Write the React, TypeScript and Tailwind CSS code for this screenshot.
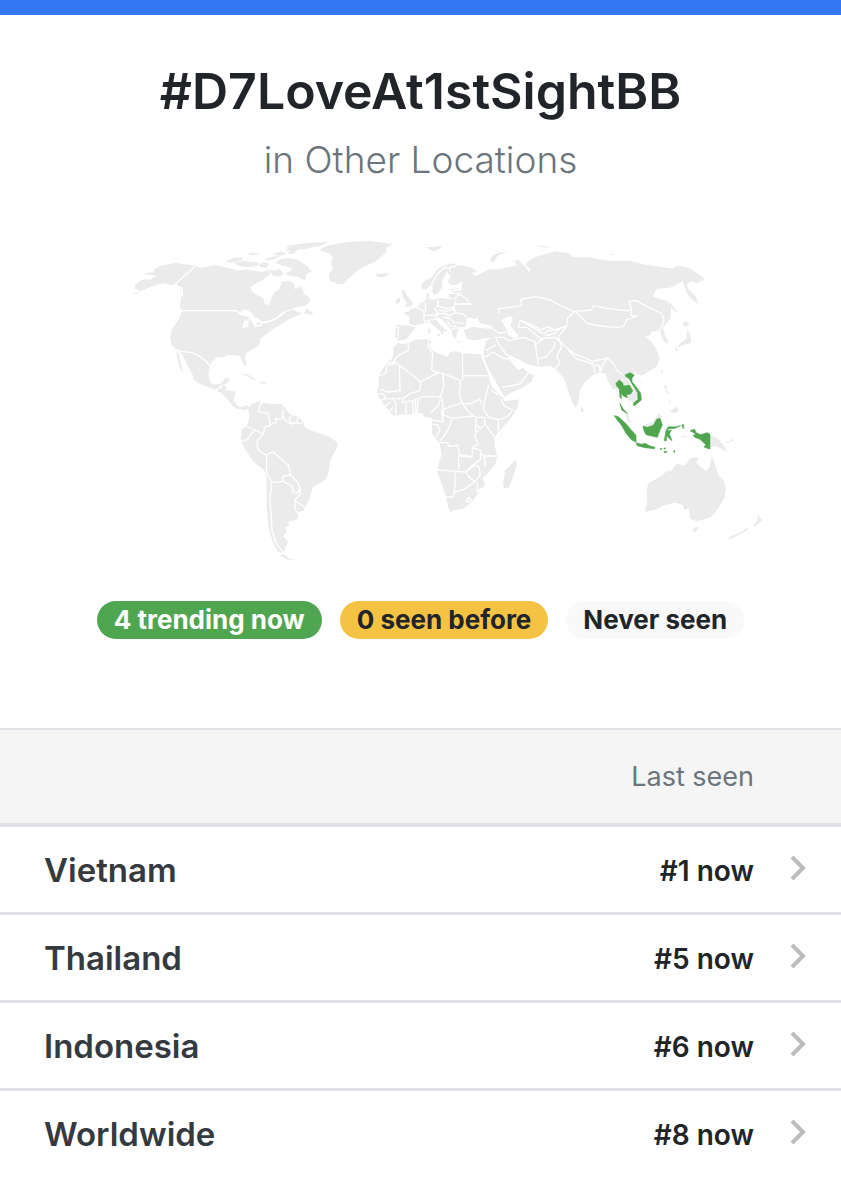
interface Trend {
  place: string;
  rank: string;
}

const trends: Trend[] = [
  { place: 'Vietnam', rank: '#1 now' },
  { place: 'Thailand', rank: '#5 now' },
  { place: 'Indonesia', rank: '#6 now' },
  { place: 'Worldwide', rank: '#8 now' },
];

interface Region {
  name: string;
  transform: string;
  land: string;
  borders?: string;
  trending?: string;
}

// Each region is drawn on its own grid, three units to one map unit
const regions: Region[] = [
  {
    name: 'North America',
    transform: 'translate(120 0) scale(0.33333)',
    land: `
      M45 165 L60 152 75 148 90 150 108 138 95 135 72 133 84 128 102 127 103 118 120 108 150 102 165 98 185 101 205 104 228 107 165 163 150 165 135 160 115 163 95 170 75 178 60 182 45 178Z
      M75 178 L50 187 30 194 52 190Z
      M228 107 L165 163 178 172 185 185 183 205 180 225 183 242 350 242 365 250 380 254 395 258 408 264 420 272 430 275 450 270 470 262 485 248 510 238 530 232 555 228 572 215 566 200 552 192 550 180 540 168 525 178 520 160 508 153 485 155 480 175 465 185 455 200 450 218 442 226 434 222 430 203 410 195 395 185 392 172 405 162 425 152 440 140 455 128 450 122 425 125 400 122 375 118 355 122 330 115 300 108 280 106 262 110 240 113Z
      M186 242 L350 242 360 255 395 262 410 275 430 279 450 276 470 268 487 255 500 245 520 238 530 245 548 250 530 258 510 266 492 276 480 285 455 300 440 312 422 325 418 345 395 360 380 368 374 380 379 398 375 410 366 395 362 380 345 376 325 375 310 382 290 383 275 395 270 408 258 393 245 384 232 372 215 368 190 365 168 358 155 345 150 325 155 300 168 280 180 262Z
      M552 250 L562 235 568 243 577 246 578 256 565 252Z
      M168 360 L190 365 215 368 232 374 245 384 258 393 270 408 265 430 270 455 278 463 295 463 305 458 313 446 330 443 325 456 312 464 302 478 290 480 260 470 240 462 222 450 217 432 205 412 196 392 185 370Z
      M168 362 L177 372 181 395 187 415 190 428 178 412 172 385Z
      M290 480 L302 478 308 466 318 468 320 480 335 484 346 490 342 510 350 525 365 533 380 529 392 536 370 540 350 534 335 517 320 500 300 490Z
      M362 432 L380 432 395 440 410 451 395 448 380 438Z
      M418 456 L432 454 442 459 425 462Z
      M465 98 L480 88 500 84 530 88 550 100 565 112 575 125 560 132 556 150 545 148 535 140 510 138 495 130 515 122 512 112 490 108Z
      M318 94 L345 82 372 83 362 92 345 97 328 99Z
      M342 100 L370 92 395 95 415 98 412 108 385 112 355 108Z
      M415 104 L430 96 448 100 440 114 422 112Z
      M440 118 L462 122 480 118 492 132 478 140 462 138Z
      M496 60 L530 42 570 38 625 36 612 44 585 50 560 56 535 58 520 72 500 70 512 62Z
      M432 88 L455 80 480 78 470 84 445 92Z
      M378 72 L400 68 420 70 400 76Z
      M455 72 L485 64 500 72 478 77Z
      M495 50 L515 44 525 46 505 53Z`,
    borders: `
      M228 107 L165 163 178 172 186 174 187 200
      M176 232 L183 242 350 242 360 250 378 254 392 260
      M358 250 L372 242 388 248 398 256
      M376 268 L370 293
      M388 264 L404 272 406 282
      M402 290 L424 284
      M424 280 L440 276 465 268 487 253
      M168 360 L190 365 215 368 232 374 245 384 258 393 270 408
      M288 480 L302 472 306 464
      M300 490 L318 480 342 492
      M335 515 L344 510`,
  },
  {
    name: 'Greenland',
    transform: 'translate(0 0)',
    land: `
      M322 18 L330 15 348 12 370 11 393 14 386 18 386 22 381 27 375 32 365 36 357 41 350 47 343 54 338 54 330 51 329 44 333 39 331 32 333 28 329 23 320 21Z`,
  },
  {
    name: 'South America',
    transform: 'translate(220 160) scale(0.33333)',
    land: `
      M85 55 L95 42 118 33 124 38 122 48 130 38 150 42 185 42 200 60 212 75 235 80 250 95 255 112 275 122 300 130 325 138 350 155 354 168 342 188 330 215 325 250 318 268 303 278 280 290 272 310 268 330 255 350 250 362 235 366 225 360 235 375 232 388 205 395 207 408 195 412 200 425 190 438 204 455 195 475 190 490 175 487 160 462 150 430 144 400 140 350 140 300 140 260 134 242 100 215 80 185 65 160 62 145 64 120 80 108 88 85Z
      M190 492 L200 498 208 506 228 510 205 511 180 496Z
      M0 4 L20 0 45 4 46 16 38 28 48 48 62 52 80 46 90 56 70 54 54 58 38 48 24 30 10 14Z`,
    borders: `
      M122 38 L115 65 145 70 150 100 148 108 M150 105 L170 95 165 85 185 88 190 60
      M190 60 L188 78 200 95 215 102 230 98 240 102 252 96
      M212 78 L208 90 215 102 M235 80 L230 98
      M80 108 L105 120 130 132 135 110 148 108
      M64 155 L82 148 95 130 105 121
      M130 132 L110 155 115 180 138 195 160 185 180 205 205 225 212 255 190 258 185 275 155 278 140 245 140 195
      M152 276 L155 290 150 320 153 370 156 420 168 460 192 490
      M185 272 L215 288 220 308 235 308 240 295 232 275 212 256
      M240 296 L242 312 225 330 226 362 M225 332 L252 350`,
  },
  {
    name: 'Europe',
    transform: 'translate(360 0) scale(0.33333)',
    land: `
      M106 285 L150 287 168 292 152 312 138 328 115 332 105 322 107 300Z
      M130 248 L148 244 152 238 172 232 195 245 192 270 200 280 175 283 165 290 148 286 148 260Z
      M172 232 L184 216 192 218 196 207 210 204 216 210 240 204 275 208 285 205 300 194 318 204 326 220 350 222 375 238 378 250 355 260 344 268 332 262 318 266 320 280 312 296 298 298 293 303 288 326 278 318 274 300 258 282 240 264 228 264 234 278 262 302 252 304 246 316 240 302 222 288 208 274 192 280Z
      M183 165 L195 152 215 142 228 122 248 108 272 100 292 104 302 118 298 136 306 154 290 165 272 164 264 155 272 138 262 125 252 142 245 156 247 172 235 190 222 195 215 182 212 165 200 178 185 178Z
      M124 180 L136 182 138 194 148 204 160 220 155 228 132 232 142 218 130 205Z
      M108 208 L120 203 120 218 106 222Z
      M46 130 L60 132 80 128 88 133 72 142 52 141Z
      M198 192 L208 188 206 204 198 204Z
      M272 178 L296 174 306 192 298 200 284 206 266 202 268 190 282 188Z
      M198 52 L225 50 252 46 240 54 222 64Z
      M226 314 L240 312 240 320Z M205 296 L210 294 210 310 204 310Z
      M290 334 L304 336 292 338Z
      M312 300 L340 290 370 295 405 298 414 308 410 322 375 325 345 331 320 326Z`,
    borders: `
      M106 290 L116 292 112 326 M148 285 L172 291
      M172 232 L192 244 192 268 198 280 M192 256 L212 256 228 254
      M196 218 L196 244 M234 206 L234 226 224 238 234 250 228 262
      M234 228 L258 236 282 232 286 212 M234 240 L256 244 282 238
      M228 252 L252 250 268 256 288 248 318 256
      M250 262 L268 264 282 278 314 280 M262 274 L272 290 290 288
      M272 300 L286 294 314 294 M280 230 L286 222 326 222
      M284 210 L290 198 308 190 M268 190 L300 190 M278 180 L300 180
      M215 182 L216 160 232 132 252 114 270 112 286 108 292 104
      M270 126 L268 112 M200 272 L232 266 M282 232 L286 248 M306 250 L320 262`,
  },
  {
    name: 'Africa',
    transform: 'translate(360 100) scale(0.33333)',
    land: `
      M100 52 L115 38 125 42 145 40 165 30 205 27 214 34 208 46 218 62 240 72 262 80 270 66 290 64 308 70 340 72 362 72 366 86 376 110 385 132 388 150 397 172 415 190 430 205 434 214 478 208 472 235 455 262 435 285 415 305 403 324 405 350 411 378 408 400 385 428 368 445 374 460 370 472 355 477 355 490 332 520 308 538 285 540 272 546 265 535 258 500 245 462 232 425 236 400 245 372 238 338 226 325 215 308 216 285 218 270 210 262 195 262 185 250 168 248 140 256 125 252 105 260 88 245 76 228 62 212 50 188 56 165 55 148 62 125 80 100 98 84 100 68Z
      M468 388 L471 402 458 445 446 474 432 474 429 458 434 436 434 420 450 408 460 396Z`,
    borders: `
      M145 40 L146 60 110 80 100 98 80 98 M102 92 V102 L80 106 78 128 60 138
      M105 95 L182 155 235 128 248 130 302 152 M118 108 L120 182 85 186 60 178
      M50 190 L72 194 78 206 60 212 M78 206 L100 206 108 222 108 258 M76 228 L92 216 M88 244 L100 232
      M205 28 L204 50 218 70 215 120 235 128 M182 155 L180 182 152 190 130 205 108 206
      M130 205 L128 218 160 212 172 204 M138 220 L138 254 M158 214 L160 250 M166 212 L168 248
      M248 130 L252 165 242 200 184 200 174 210 172 248 M242 200 L236 226 212 248
      M302 150 L298 190 306 218 250 238 246 205 M308 68 V150 M308 137 H385
      M250 238 L250 255 276 265 340 258 M306 218 L322 242 345 262 374 262
      M305 220 L330 222 360 208 366 224 M386 165 L374 215 370 236 386 262 415 268 440 262 458 240 430 226 424 208
      M395 182 L416 194 M415 268 V302 M374 262 L376 284 404 322 M350 284 L360 296 372 286
      M218 270 L250 276 244 240 M218 284 H232 L240 300 228 322 M276 265 L264 300 240 334
      M348 262 L346 320 354 344 338 352 336 380 300 374 292 345 268 350 262 338 238 338
      M346 308 L356 304 M296 374 V418 M232 420 L262 422 318 426 335 408 362 388 362 360 338 354
      M300 378 L336 382 M372 378 H408 M366 370 L374 385 376 410
      M318 426 L345 405 358 412 360 436 345 455 328 442Z M285 428 V462 L280 502 256 500
      M284 486 L312 478 345 455 M352 458 V488 M320 508 L328 504 334 510 328 516 320 514Z`,
  },
  {
    name: 'Asia',
    transform: 'translate(460 0) scale(0.33333)',
    land: `
      M-10 106 L15 108 40 115 50 124 38 128 28 124 46 138 60 132 76 124 90 118 120 118 150 110 172 106 162 92 176 90 190 104 204 120 206 128 212 118 196 106 200 95 225 82 255 72 290 64 325 70 340 82 390 82 440 92 510 92 560 105 610 112 640 115 652 106 690 115 715 132 736 148 722 154 714 160 692 154 680 165 690 182 708 200 714 222 695 208 680 190 674 170 668 154 655 160 640 170 625 174 590 176 578 198 600 208 622 212 634 232 632 265 620 280 608 292 616 318 626 335 618 342 606 325 600 300 590 302 575 305 565 320 550 316 572 332 590 360 600 385 590 410 565 425 545 437 525 430 510 428 510 445 490 445 480 455 472 462 472 490 480 508 474 500 468 478 458 478 445 455 436 430 418 428 405 432 395 438 375 455 360 480 355 515 348 534 338 520 325 485 312 445 298 430 285 415 270 408 232 410 200 402 180 390 150 376 146 382 158 402 175 420 188 414 205 428 222 436 214 456 185 475 150 490 134 502 126 488 110 460 90 425 72 385 72 360 78 332 100 322 100 300 95 288 60 280 52 262 75 250 75 238 35 222 18 206 2 194 6 155 -4 140Z
      M626 212 L638 228 656 250 646 246 632 230Z
      M668 280 L678 274 690 284 674 292Z
      M682 296 L692 318 694 338 670 346 650 352 662 340 680 325Z
      M643 352 L653 356 650 366Z
      M88 94 L100 76 120 67 142 67 114 76 102 96Z
      M225 46 L250 48 278 54 250 52Z
      M444 71 L466 72 460 76Z
      M605 420 L609 416 606 430Z`,
    borders: `
      M118 252 L115 236 150 232 186 226 182 208 225 200 265 208 300 225 335 242 345 244 322 265 320 288 285 300 262 290 245 300 215 285 182 270 174 292
      M345 244 L395 240 400 227 440 235 500 242 515 240 512 256 530 258 500 270 490 290 465 292 420 288 380 280 365 262 345 244
      M515 240 L508 214 530 212 560 230 605 250 612 270 600 300
      M320 288 L295 320 300 335 330 362 350 375 400 394 440 384 460 400 470 420 490 435
      M325 360 L348 386 400 402 404 430 M405 405 L420 408 418 430 M440 386 L426 410 420 430
      M130 322 L150 332 190 322 225 335 230 375 235 405
      M225 345 L250 325 285 322 300 335 M285 335 L282 352 260 380 235 386
      M300 335 L305 350 290 380 300 398 288 414
      M174 292 L200 292 240 325 250 330 M182 272 L215 290 252 312 270 298 M256 318 L292 308 M270 302 L300 300
      M108 325 L118 345 138 372 150 380 M78 362 L108 345 M75 382 L100 366 130 386 150 386
      M126 472 L180 462 198 438 M198 438 L205 428 M100 298 L118 310 138 306 M104 322 L130 322
      M0 222 L35 222 M2 194 L26 212`,
  },
  {
    name: 'South East Asia and Oceania',
    transform: 'translate(560 120) scale(0.33333)',
    land: `
      M188 86 L198 84 210 100 232 128 234 142 222 156 206 152 203 138 216 130 217 116 206 102 190 106Z
      M252 225 L278 216 296 190 308 200 298 206 288 210 278 225 262 230Z
      M194 188 L206 196 213 222 202 212Z
      M312 104 L320 106 320 124 332 136 318 128Z
      M328 186 L350 168 356 182 346 190Z
      M325 148 L335 156 330 160Z
      M64 168 L72 180 68 188 62 182Z
      M303 60 L307 60 305 74Z M236 94 L246 94 240 100Z
      M452 256 L475 266 490 285 503 306 480 294 465 288 452 294Z
      M495 275 L512 272 520 262 518 274 502 279Z
      M358 258 L384 258 370 262Z
      M258 486 L254 478 262 460 260 420 265 400 300 380 325 360 330 366 350 342 375 346 390 325 415 322 410 340 438 364 448 350 456 318 466 345 475 374 492 394 498 418 494 442 475 475 452 502 425 510 408 514 390 506 386 474 374 480 368 464 345 458 312 466 290 478 270 482Z
      M400 534 L416 531 408 545 398 544Z
      M594 488 L598 502 608 510 598 518 585 528 580 524 592 512Z
      M562 534 L566 538 535 556 510 568 504 562 535 550Z`,
    trending: `
      M195 75 L210 68 223 75 216 84 216 95 228 110 242 130 244 150 232 160 222 168 220 160 234 148 233 128 214 98 208 86 200 82Z
      M168 100 L178 90 188 98 190 108 208 105 218 122 212 132 200 134 202 143 190 138 184 130 184 146 180 142 178 118 170 108Z
      M180 160 L188 175 203 191 185 180Z
      M163 197 L175 200 195 218 212 238 228 256 228 276 215 270 198 250 184 225 170 208Z
      M228 278 L245 283 255 280 270 288 285 292 283 296 255 293 232 287Z
      M249 228 L262 232 280 226 290 208 300 205 307 225 300 240 292 262 275 258 258 254 252 242Z
      M318 242 L325 230 345 231 362 227 345 235 326 236 322 244 334 240 328 252 336 272 326 264 320 256 319 272 313 272Z
      M390 242 L404 238 408 248 422 254 442 248 450 253 450 297 432 291 438 284 420 268 404 262 400 256 408 252Z
      M367 224 L371 224 371 236 367 232Z
      M300 296 L306 296 303 300Z M312 304 L322 306 314 308Z M341 302 L345 302 343 308Z M312 294 L318 295 312 297Z`,
  },
];

function WorldMap() {
  return (
    <svg viewBox="0 0 841 340" className="block w-full" role="img" aria-label="World map of trending countries">
      {regions.map((region) => (
        <g key={region.name} transform={region.transform}>
          <path d={region.land} fill="#ebebeb" />
          {region.borders && (
            <path d={region.borders} fill="none" stroke="#ffffff" strokeWidth={4} strokeLinejoin="round" />
          )}
          {region.trending && (
            <path d={region.trending} fill="#4fa64f" stroke="#4fa64f" strokeWidth={2} strokeLinejoin="round" />
          )}
        </g>
      ))}
      {/* Caspian Sea and the Great Lakes */}
      <g fill="#ffffff">
        <path d="M501 90 L510 86 513 89 510 95 515 102 519 106 515 109 508 105 507 100Z" />
        <path d="M238 83 L246 79 253 84 254 88 248 86Z" />
        <path d="M244 93 L249 88 248 97 242 98Z M250 87 L259 88 261 93 257 92 255 98 252 92Z M252 97 L262 94 262 96Z" />
      </g>
    </svg>
  );
}

function Chevron() {
  return (
    <svg viewBox="0 0 18 28" className="block h-7 w-[18px]" aria-hidden="true">
      <path d="M2 3 L13 14 2 25" fill="none" stroke="#bcbcbc" strokeWidth="4" />
    </svg>
  );
}

export default function App() {
  return (
    <div className="bg-white font-['Inter',sans-serif] text-[#212529]">
      <div className="h-[15px] bg-[#3478f6]" />

      <header className="pt-11 text-center">
        <h1 className="text-[50px] leading-[64px] font-semibold">#D7LoveAt1stSightBB</h1>
        <p className="mt-[15px] text-[37px] leading-[44px] font-light text-[#6c757d]">in Other Locations</p>
      </header>

      <div className="mt-12">
        <WorldMap />
      </div>

      <div className="mt-[31px] flex justify-center gap-[18px] text-[26px] leading-[38px] font-bold">
        <span className="rounded-full bg-[#50a550] px-[17px] text-white">4 trending now</span>
        <span className="rounded-full bg-[#f5c344] px-[17px]">0 seen before</span>
        <span className="rounded-full bg-[#f9f9fa] px-[17px]">Never seen</span>
      </div>

      <table className="mt-[89px] w-full border-separate border-spacing-0">
        <thead>
          <tr className="h-[99px] bg-[#f5f5f5] text-[27px] text-[#6c757d]">
            <th scope="col" aria-label="Location" className="border-t-2 border-b-4 border-[#dee2e6]" />
            <th scope="col" className="border-t-2 border-b-4 border-[#dee2e6] pt-0.5 text-right font-normal">
              Last seen
            </th>
            <th scope="col" aria-label="Details" className="w-[87px] border-t-2 border-b-4 border-[#dee2e6]" />
          </tr>
        </thead>
        <tbody>
          {trends.map((trend) => (
            <tr key={trend.place} className="group h-[88px]">
              <td className="border-b-3 border-[#dee2e6] pt-0.5 pl-11 text-[33px] font-semibold text-[#343a40] group-last:border-transparent">
                <a href="#">{trend.place}</a>
              </td>
              <td className="border-b-3 border-[#dee2e6] pt-0.5 text-right text-[28px] font-semibold group-last:border-transparent">
                {trend.rank}
              </td>
              <td className="border-b-3 border-[#dee2e6] pb-1 pl-9 group-last:border-transparent">
                <Chevron />
              </td>
            </tr>
          ))}
        </tbody>
      </table>
    </div>
  );
}
